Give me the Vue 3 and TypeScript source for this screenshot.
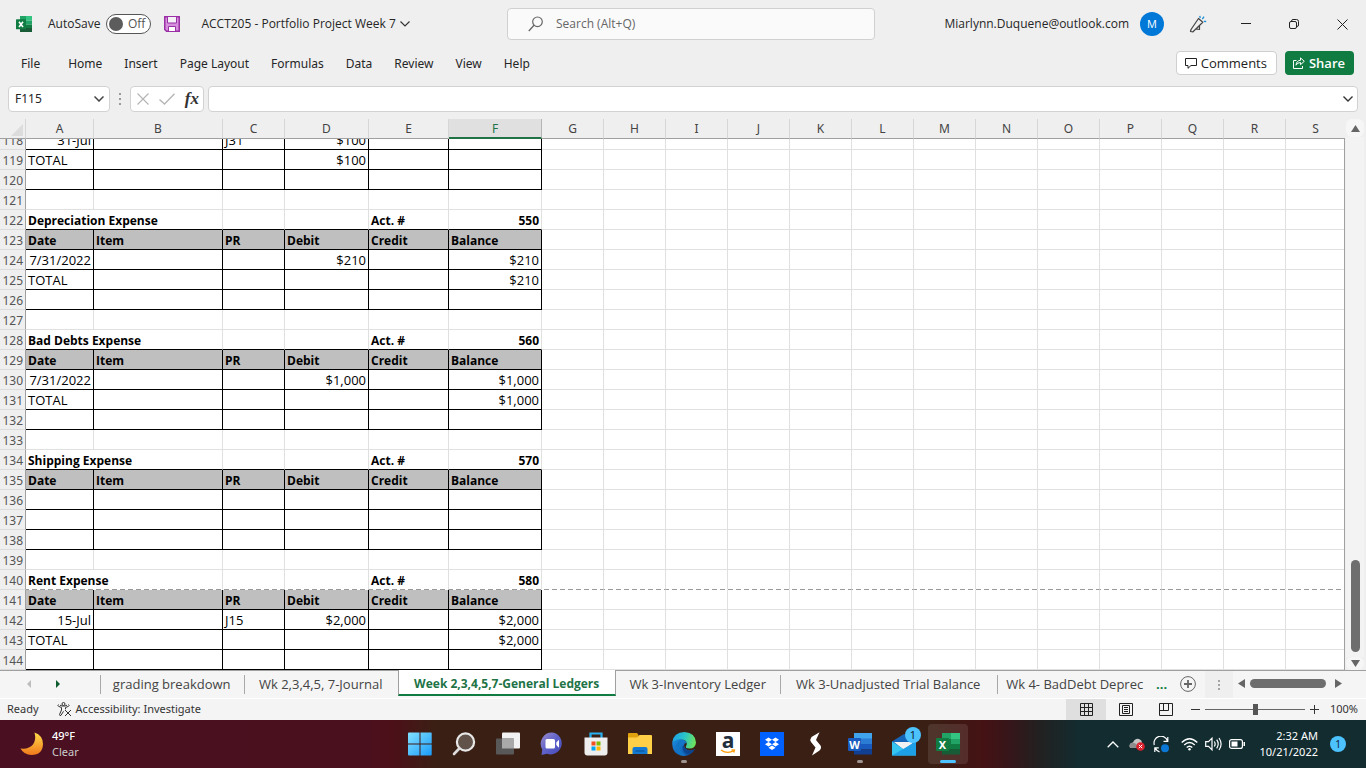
<script setup lang="ts">
import { ref } from 'vue'

interface Cell {
  text?: string
  span?: number
  align?: 'right'
}
interface Row {
  n: number
  kind: 'blank' | 'title' | 'head' | 'body'
  pageBreak?: boolean
  cells: Cell[]
}
interface Ledger {
  start: number
  name: string
  account: string
  entries: string[][]
  pageBreak?: boolean
}

const letters = 'ABCDEFGHIJKLMNOPQRS'.split('')
const menus = ['File', 'Home', 'Insert', 'Page Layout', 'Formulas', 'Data', 'Review', 'View', 'Help']
const headings = ['Date', 'Item', 'PR', 'Debit', 'Credit', 'Balance']

const toCells = (values: string[]): Cell[] =>
  headings.map((_, i) => {
    const text = values[i] ?? ''
    const numeric = text.startsWith('$') || /^\d/.test(text)
    return { text, align: numeric ? 'right' : undefined }
  })

const ledgers: Ledger[] = [
  { start: 122, name: 'Depreciation Expense', account: '550', entries: [['7/31/2022', '', '', '$210', '', '$210'], ['TOTAL', '', '', '', '', '$210'], []] },
  { start: 128, name: 'Bad Debts Expense', account: '560', entries: [['7/31/2022', '', '', '$1,000', '', '$1,000'], ['TOTAL', '', '', '', '', '$1,000'], []] },
  { start: 134, name: 'Shipping Expense', account: '570', entries: [[], [], []] },
  { start: 140, name: 'Rent Expense', account: '580', pageBreak: true, entries: [['15-Jul', '', 'J15', '$2,000', '', '$2,000'], ['TOTAL', '', '', '', '', '$2,000'], []] },
]

const rows: Row[] = [
  { n: 118, kind: 'body', cells: toCells(['31-Jul', '', 'J31', '$100']) },
  { n: 119, kind: 'body', cells: toCells(['TOTAL', '', '', '$100']) },
  { n: 120, kind: 'body', cells: toCells([]) },
]
for (const l of ledgers) {
  rows.push({ n: l.start - 1, kind: 'blank', cells: toCells([]) })
  rows.push({
    n: l.start,
    kind: 'title',
    pageBreak: l.pageBreak,
    cells: [{ text: l.name, span: 2 }, {}, {}, { text: 'Act. #' }, { text: l.account, align: 'right' }],
  })
  rows.push({ n: l.start + 1, kind: 'head', cells: headings.map((text) => ({ text })) })
  l.entries.forEach((e, i) => rows.push({ n: l.start + 2 + i, kind: 'body', cells: toCells(e) }))
}

const tabs = [
  { label: 'grading breakdown', width: 144 },
  { label: 'Wk 2,3,4,5, 7-Journal', width: 154 },
  { label: 'Week 2,3,4,5,7-General Ledgers', width: 218 },
  { label: 'Wk 3-Inventory Ledger', width: 164 },
  { label: 'Wk 3-Unadjusted Trial Balance', width: 217 },
  { label: 'Wk 4- BadDebt Deprec', width: 156 },
]
const activeTab = ref(2)
const nameBox = ref('F115')
const formula = ref('')
const search = ref('')
const zoom = ref(50)
const autosave = ref(false)
</script>

<template>
  <div class="app">
    <header class="titlebar">
      <div class="title-left">
        <svg class="xl-small" width="16" height="16" viewBox="0 0 24 24" aria-hidden="true">
          <rect x="6" y="0" width="9" height="7" fill="#21a366" /><rect x="15" y="0" width="9" height="7" fill="#33c481" />
          <rect x="6" y="7" width="9" height="6" fill="#107c41" /><rect x="15" y="7" width="9" height="6" fill="#21a366" />
          <rect x="6" y="13" width="9" height="11" fill="#185c37" /><rect x="15" y="13" width="9" height="5" fill="#107c41" /><rect x="15" y="18" width="9" height="6" fill="#185c37" />
          <rect x="0" y="5" width="15" height="15" rx="1" fill="#107c41" />
          <path d="M4.500 8.500l6 8M10.500 8.500l-6 8" stroke="#fff" stroke-width="2.400" />
        </svg>
        <label class="autosave">
          <span>AutoSave</span>
          <span class="toggle"><input v-model="autosave" type="checkbox" /><i></i><b>Off</b></span>
        </label>
        <button class="plain save" aria-label="Save">
          <svg width="16" height="16" viewBox="0 0 16 16"><path d="M.75.75h14.500v14.500H2.500L.75 13.500z" fill="#d68fdc" stroke="#9b2fa6" stroke-width="1.500" /><path d="M3.500 1v6h9V1" fill="#f5f0f5" stroke="#9b2fa6" /><path d="M4.500 15v-4.500h7V15" fill="#fff" stroke="#9b2fa6" /></svg>
        </button>
        <button class="plain doc">ACCT205 - Portfolio Project Week 7
          <svg width="10" height="6" viewBox="0 0 10 6"><path d="M.5.5L5 5 9.500.5" fill="none" stroke="#333" stroke-width="1.200" /></svg>
        </button>
      </div>
      <label class="search">
        <svg width="16" height="16" viewBox="0 0 16 16"><circle cx="9.500" cy="5.800" r="4.800" fill="none" stroke="#666" stroke-width="1.200" /><path d="M6 9.300L.8 15" stroke="#666" stroke-width="1.300" /></svg>
        <input v-model="search" type="text" placeholder="Search (Alt+Q)" aria-label="Search" />
      </label>
      <div class="title-right">
        <span class="email">Miarlynn.Duquene@outlook.com</span>
        <button class="plain avatar">M</button>
        <button class="plain win" aria-label="What's new">
          <svg width="18" height="18" viewBox="0 0 18 18" fill="none"><path d="M1.500 16.500L2 14.500 9.500 3.500 13.800 7.300 4 16.800zM7 14l1.500-1.400 2-2v3.900z" stroke="#444" stroke-width="1.200" stroke-linejoin="round" /><path d="M11.200 3L10.800.8M13.300 4.200l1.700-2.500M14.800 6.300l2.400.2" stroke="#1b8fd6" stroke-width="1.300" /></svg>
        </button>
        <button class="plain win" aria-label="Minimize"><svg width="10" height="10" viewBox="0 0 10 10"><path d="M0 4.500h10" stroke="#222" /></svg></button>
        <button class="plain win" aria-label="Restore"><svg width="10" height="10" viewBox="0 0 10 10" fill="none" stroke="#222"><rect x=".5" y="2.500" width="7" height="7" rx="1.500" /><path d="M2.500 2Q2.700.5 4 .5h3.500q2 0 2 2V6q0 1.500-1.500 1.500" /></svg></button>
        <button class="plain win" aria-label="Close"><svg width="11" height="11" viewBox="0 0 11 11"><path d="M.5.5l10 10M10.500.5l-10 10" stroke="#222" /></svg></button>
      </div>
    </header>

    <nav class="menubar">
      <button v-for="m in menus" :key="m" class="plain menu">{{ m }}</button>
      <span class="grow"></span>
      <button class="action comments">
        <svg width="12" height="11" viewBox="0 0 12 11" fill="none" stroke="#222"><path d="M.5.500h11v7H6L3 10.300V7.500H.5z" /></svg>Comments
      </button>
      <button class="action share">
        <svg width="12" height="12" viewBox="0 0 12 12" fill="none" stroke="#fff"><path d="M3.500 3.500h-3v8h9V9" /><path d="M3 8.200Q3.500 3.500 7.500 3.300V.9L11.300 4.300 7.500 7.700V5.500Q4.500 5.500 3 8.200z" /></svg>Share
      </button>
    </nav>

    <div class="formulabar">
      <div class="box namebox">
        <input v-model="nameBox" type="text" aria-label="Name box" />
        <svg width="10" height="6" viewBox="0 0 10 6"><path d="M.5.5L5 5 9.500.5" fill="none" stroke="#444" stroke-width="1.500" /></svg>
      </div>
      <svg class="dots" width="3" height="12" viewBox="0 0 3 12" fill="#9a9a9a"><rect y="0" width="2" height="2" /><rect y="5" width="2" height="2" /><rect y="10" width="2" height="2" /></svg>
      <div class="box fxbox">
        <button class="plain" aria-label="Cancel"><svg width="12" height="12" viewBox="0 0 12 12"><path d="M.5.5l11 11M11.500.5l-11 11" stroke="#b5b5b5" stroke-width="1.200" /></svg></button>
        <button class="plain" aria-label="Enter"><svg width="16" height="12" viewBox="0 0 16 12"><path d="M.5 6.500L5.500 11 15.500.7" fill="none" stroke="#b5b5b5" stroke-width="1.300" /></svg></button>
        <button class="plain fx" aria-label="Insert function">fx</button>
      </div>
      <div class="box fbox">
        <input v-model="formula" type="text" aria-label="Formula" />
        <svg width="10" height="6" viewBox="0 0 10 6"><path d="M.5.5L5 5 9.500.5" fill="none" stroke="#333" stroke-width="1.400" /></svg>
      </div>
    </div>

    <main class="sheet">
      <div class="grid">
        <table class="cols">
          <colgroup><col class="c-n" /><col v-for="l in letters" :key="l" :class="'c-' + l" /></colgroup>
          <thead>
            <tr>
              <th class="corner"><svg width="12" height="12" viewBox="0 0 12 12"><path d="M12 0v12H0z" fill="#dcdcdc" /></svg></th>
              <th v-for="l in letters" :key="l" scope="col" :class="{ selected: l === 'F' }">{{ l }}</th>
            </tr>
          </thead>
        </table>
        <div class="viewport">
          <table class="cells">
            <colgroup><col class="c-n" /><col v-for="l in letters" :key="l" :class="'c-' + l" /></colgroup>
            <tbody>
              <tr v-for="r in rows" :key="r.n" :class="[r.kind, { pagebreak: r.pageBreak }]">
                <th scope="row">{{ r.n }}</th>
                <td v-for="(c, i) in r.cells" :key="i" class="led" :class="c.align" :colspan="c.span">{{ c.text }}</td>
                <td v-for="l in letters.slice(6)" :key="l"></td>
              </tr>
            </tbody>
          </table>
        </div>
      </div>
      <div class="vscroll">
        <button class="plain" aria-label="Scroll up"><svg width="9" height="7" viewBox="0 0 9 7"><path d="M4.500 0L9 7H0z" fill="#666" /></svg></button>
        <div class="vtrack"><div class="vthumb"></div></div>
        <button class="plain down" aria-label="Scroll down"><svg width="9" height="7" viewBox="0 0 9 7"><path d="M0 0h9L4.500 7z" fill="#666" /></svg></button>
      </div>
    </main>

    <div class="tabs">
      <div class="tabnav">
        <button class="plain" aria-label="Previous sheet"><svg width="4" height="8" viewBox="0 0 4 8"><path d="M4 0v8L0 4z" fill="#bdbdbd" /></svg></button>
        <button class="plain" aria-label="Next sheet"><svg width="4" height="8" viewBox="0 0 4 8"><path d="M0 0v8l4-4z" fill="#0e5c2f" /></svg></button>
      </div>
      <button v-for="(t, i) in tabs" :key="t.label" class="plain tab" :class="{ active: i === activeTab }" :style="{ width: t.width + 'px' }" @click="activeTab = i">{{ t.label }}</button>
      <button class="plain more">...</button>
      <button class="plain add" aria-label="New sheet"><svg width="16" height="16" viewBox="0 0 16 16" fill="none" stroke="#666"><circle cx="8" cy="8" r="7.400" /><path d="M8 4v8M4 8h8" stroke-width="1.800" /></svg></button>
      <div class="splitter"><svg width="3" height="10" viewBox="0 0 3 10" fill="#a5a5a5"><rect width="2" height="2" /><rect y="4" width="2" height="2" /><rect y="8" width="2" height="2" /></svg></div>
      <div class="hscroll">
        <button class="plain" aria-label="Scroll left"><svg width="7" height="9" viewBox="0 0 7 9"><path d="M7 0v9L0 4.500z" fill="#666" /></svg></button>
        <div class="hthumb"></div>
        <button class="plain" aria-label="Scroll right"><svg width="7" height="9" viewBox="0 0 7 9"><path d="M0 0v9l7-4.500z" fill="#666" /></svg></button>
      </div>
    </div>

    <footer class="status">
      <span class="ready">Ready</span>
      <button class="plain access">
        <svg width="15" height="15" viewBox="0 0 15 15" fill="none" stroke="#333"><circle cx="6.500" cy="2" r="1.500" /><path d="M1.500 2.500Q.3 3.500 1.500 4.300L4.500 5.500V8L2.500 12.500Q2.700 14.300 4 13.300L6.500 9.300M11.500 2.500Q12.700 3.500 11.500 4.300L8.500 5.500V7.300M3 3.200l2 .8h3l2-.8M8 8l6 6M14 8l-6 6" /></svg>
        Accessibility: Investigate
      </button>
      <span class="grow"></span>
      <button class="plain view on" aria-label="Normal view"><svg width="13" height="13" viewBox="0 0 13 13" fill="none" stroke="#222"><path d="M.5.5h12v12H.5zM4.500.5v12M8.500.5v12M.5 4.500h12M.5 8.500h12" /></svg></button>
      <button class="plain view" aria-label="Page layout view"><svg width="14" height="13" viewBox="0 0 14 13" fill="none" stroke="#222"><path d="M.5.5h13v12H.5zM3.500 2.500h7v8h-7zM5 4.500h4M5 6.500h4M5 8.500h4" /></svg></button>
      <button class="plain view" aria-label="Page break view"><svg width="14" height="13" viewBox="0 0 14 13" fill="none" stroke="#222"><path d="M.5.500h13v12H.5zM4.500.5v7M9.500.5v7M.5 7.500h9" /></svg></button>
      <button class="plain zbtn" aria-label="Zoom out"><svg width="9" height="9" viewBox="0 0 9 9"><path d="M0 4.500h9" stroke="#333" /></svg></button>
      <input v-model="zoom" class="zoom" type="range" min="0" max="100" aria-label="Zoom" />
      <button class="plain zbtn" aria-label="Zoom in"><svg width="9" height="9" viewBox="0 0 9 9"><path d="M0 4.500h9M4.500 0v9" stroke="#333" /></svg></button>
      <span class="pct">100%</span>
    </footer>

    <div class="taskbar">
      <button class="plain weather">
        <svg width="24" height="24" viewBox="0 0 24 24">
          <defs><linearGradient id="moon" x1="0" y1="0" x2="0" y2="1"><stop offset="0" stop-color="#ffdc4a" /><stop offset="1" stop-color="#f0791c" /></linearGradient></defs>
          <path d="M14.500.500Q23 3.500 23 12 22.500 23 11.500 23 4 23 .5 16.500 9 17.500 13 12.500 16.500 7.500 14.500.5z" fill="url(#moon)" />
        </svg>
        <span><b>49°F</b><em>Clear</em></span>
      </button>
      <div class="apps">
        <button class="plain appbtn" aria-label="Start">
          <svg width="24" height="24" viewBox="0 0 24 24"><defs><linearGradient id="win" x1="0" y1="0" x2="1" y2="1"><stop offset="0" stop-color="#83e1ff" /><stop offset="1" stop-color="#1a9cfb" /></linearGradient></defs><path d="M0 1.500Q0 .5 1 .5h10.500v11H0zM12.500.5H23q.7 0 .7 1v10H12.500zM0 12.500h11.500v11H1q-1 0-1-1zM12.500 12.500h11.200v10q0 1-1 1H12.500z" fill="url(#win)" /></svg>
        </button>
        <button class="plain appbtn" aria-label="Search">
          <svg width="24" height="24" viewBox="0 0 24 24"><circle cx="13.500" cy="10" r="8.600" fill="#62534a" stroke="#e8e8e8" stroke-width="2.200" /><path d="M7.300 16.500L2 22" stroke="#ddd" stroke-width="2.600" stroke-linecap="round" /></svg>
        </button>
        <button class="plain appbtn" aria-label="Task view">
          <svg width="24" height="24" viewBox="0 0 24 24"><rect x="6" y=".5" width="18" height="16" rx="1" fill="#f2f2f2" /><rect x="0" y="6.500" width="18" height="16" rx="1" fill="#585858" /><path d="M6 6.500h12v10H6z" fill="#a9a9a9" /></svg>
        </button>
        <button class="plain appbtn" aria-label="Chat">
          <svg width="24" height="24" viewBox="0 0 24 24"><defs><linearGradient id="chat" x1="0" y1="0" x2="1" y2="1"><stop offset="0" stop-color="#9b8ccf" /><stop offset=".5" stop-color="#5f62c9" /><stop offset="1" stop-color="#4549b8" /></linearGradient></defs><path d="M12.500.5a11 11 0 1 1-5.500 21.200L1.500 23l.8-5.500A11.300 11.300 0 0 1 12.500.5z" fill="url(#chat)" /><rect x="5.500" y="7" width="9.500" height="9.500" rx="1.500" fill="#fff" /><path d="M16.300 10.500l2.700-2.700v8l-2.700-2.700z" fill="#fff" /></svg>
        </button>
        <button class="plain appbtn" aria-label="Store">
          <svg width="24" height="24" viewBox="0 0 24 24"><path d="M6.500 6V1.500h11V6" fill="none" stroke="#28b1f0" stroke-width="2.200" /><path d="M.5 5.500h23v15q0 3-3 3h-17q-3 0-3-3z" fill="#eee" /><rect x="7.500" y="9.500" width="4" height="4" fill="#f25022" /><rect x="12.500" y="9.500" width="4" height="4" fill="#7fba00" /><rect x="7.500" y="14.500" width="4" height="4" fill="#00a4ef" /><rect x="12.500" y="14.500" width="4" height="4" fill="#ffb900" /></svg>
        </button>
        <button class="plain appbtn" aria-label="File Explorer">
          <svg width="24" height="24" viewBox="0 0 24 24"><path d="M0 2q0-1 1-1h8l1.500 2v3H0z" fill="#e0a30e" /><path d="M0 5.500h9L11.500 3H23q1 0 1 1v18H0z" fill="#ffcf48" /><path d="M4.500 22v-5q0-2 2-2h11q2 0 2 2v5z" fill="#1479d2" /><path d="M7.500 19.500h9v-1h-9z" fill="#0b4f94" /></svg>
        </button>
        <button class="plain appbtn running" aria-label="Edge">
          <svg width="24" height="24" viewBox="0 0 24 24"><defs><linearGradient id="edge" x1="0" y1=".3" x2="1" y2=".5"><stop offset="0" stop-color="#1c9fe8" /><stop offset=".5" stop-color="#2ac5c7" /><stop offset="1" stop-color="#6fe35a" /></linearGradient><linearGradient id="edge2" x1="0" y1="0" x2="1" y2="1"><stop offset="0" stop-color="#1b8de0" /><stop offset="1" stop-color="#0d4a9c" /></linearGradient></defs><path d="M.2 10.500Q5 5 11 7.500 14 8.500 15 11q-2.500-.5-3 2 0 4 5 5.500 3 .5 5.800-1.500Q19 24 12 24 1 23.500.2 12z" fill="url(#edge2)" /><path d="M11 8.200q-3.500 2-3 6.800.5 5.500 6 8.500-6 1-9.500-3.500Q2.500 12 8 8.500z" fill="#1274c4" /><path d="M12 13q0 4.500 5 5.500 3 .5 5.800-1.500-1.800 4-5.300 5.500Q10 21 10.500 14.500z" fill="#0b4590" /><path d="M.2 10.500Q1.500 0 12.500 0 23.500.8 24 10.500q-.5 6-6.500 6-4.500 0-3.500-2.200 2-3.300-.8-5.800Q7 4.500.2 10.500z" fill="url(#edge)" /></svg>
        </button>
        <button class="plain appbtn" aria-label="Amazon"><span class="amazon">a<svg width="16" height="5" viewBox="0 0 16 5"><path d="M1 1q6.500 4.500 13 .5M11.500.8l3 .2-.8 2.500" fill="none" stroke="#f90" stroke-width="1.300" /></svg></span></button>
        <button class="plain appbtn" aria-label="Dropbox">
          <svg width="24" height="24" viewBox="0 0 24 24"><rect width="24" height="24" fill="#0061ff" /><path d="M8.500 5.500L12 7.800 8.500 10 5 7.800zM15.500 5.500L19 7.800 15.500 10 12 7.800zM8.500 10l3.500 2.300-3.500 2.200L5 12.300zM15.500 10l3.500 2.300-3.500 2.200-3.500-2.200zM12 13.500l3.500 2.200L12 18l-3.500-2.300z" fill="#fff" /></svg>
        </button>
        <button class="plain appbtn" aria-label="S app">
          <svg width="24" height="24" viewBox="0 0 24 24"><path d="M15.500.3L7.500 5Q5.500 7.500 7 10l4.500 5.500L8 23.500l7.500-5q2.500-2.500 1-5L12 8z" fill="#fff" /></svg>
        </button>
        <button class="plain appbtn running" aria-label="Word">
          <svg width="24" height="24" viewBox="0 0 24 24"><rect x="6" y="1" width="18" height="6" fill="#41a5ee" /><rect x="6" y="6.500" width="18" height="5.500" fill="#2b7cd3" /><rect x="6" y="12" width="18" height="5.500" fill="#185abd" /><rect x="6" y="17.500" width="18" height="5" fill="#103f91" /><rect y="6" width="13" height="13" rx="1" fill="#185abd" /><text x="6.500" y="16.500" class="glyph">W</text></svg>
        </button>
        <button class="plain appbtn" aria-label="Mail, 1 new">
          <svg width="24" height="24" viewBox="0 0 24 24"><path d="M0 9.500L12 2l12 7.500v13H0z" fill="#1565b8" /><path d="M2 10l10 8 10-8z" fill="#f2f2f2" /><path d="M0 9.500l12 8 12-8v14H0z" fill="#36c5f0" /><path d="M0 23.500l24-14v14z" fill="#1ea0e6" /></svg>
          <span class="badge">1</span>
        </button>
        <button class="plain appbtn current" aria-label="Excel">
          <svg width="24" height="24" viewBox="0 0 24 24"><rect x="6" y="1" width="9" height="6" fill="#21a366" /><rect x="15" y="1" width="9" height="6" fill="#33c481" /><rect x="6" y="7" width="9" height="10" fill="#107c41" /><rect x="15" y="7" width="9" height="5" fill="#21a366" /><rect x="15" y="12" width="9" height="5" fill="#107c41" /><rect x="6" y="17" width="18" height="5.500" fill="#185c37" /><rect y="6" width="13" height="13" rx="1" fill="#107c41" /><text x="6.500" y="16.500" class="glyph">X</text></svg>
        </button>
      </div>
      <div class="tray">
        <button class="plain slot" aria-label="Show hidden icons"><svg width="12" height="7" viewBox="0 0 12 7"><path d="M.7 6.300L6 1l5.300 5.300" fill="none" stroke="#fff" stroke-width="1.300" /></svg></button>
        <button class="plain slot" aria-label="OneDrive"><svg width="16" height="14" viewBox="0 0 16 14"><path d="M1.500 11Q-.5 9 1.500 6.500 3 5.500 4 5.500 6 1 10 2q3 1 3 4 2 1 2 3l-2 2z" fill="#c4c4c4" /><path d="M1.500 11q-2-2 0-4.500Q4 5 6.500 6.500L11 11z" fill="#8d8d8d" /><circle cx="11.500" cy="9.500" r="4.300" fill="#d9202b" /><path d="M9.800 7.800l3.400 3.400M13.200 7.800l-3.400 3.400" stroke="#fff" /></svg></button>
        <button class="plain slot" aria-label="Updates"><svg width="17" height="17" viewBox="0 0 17 17" fill="none" stroke="#fff" stroke-width="1.200"><path d="M1.300 9A6.500 6.500 0 0 1 14.500 5M14.800 1v4.300h-4.300M6.500 15.800Q3.500 15 2.300 12M5.800 11.800H1.800V16" /><circle cx="12" cy="12.300" r="4" fill="#0a78d4" stroke="none" /></svg></button>
        <button class="plain sys" aria-label="Network, sound and battery">
          <svg width="24" height="13" viewBox="-4 0 24 13" fill="none" stroke="#fff" stroke-width="1.300"><path d="M.7 4.500q7.800-7.500 15.600 0M3.200 7q5.300-5 10.600 0M5.700 9.500q2.800-2.600 5.600 0" /><circle cx="8.500" cy="11.300" r="1.200" fill="#fff" stroke="none" /></svg>
          <svg width="24" height="14" viewBox="-4 0 24 14" fill="none" stroke="#fff" stroke-width="1.200"><path d="M.7 4.700h2.800L7 1.200v11.600L3.500 9.300H.7zM9.300 4.500q1.700 2.500 0 5M11.700 2.700q3 4.300 0 8.600M14 1q4.200 6 0 12" /></svg>
          <svg width="24" height="10" viewBox="-4 0 24 10"><rect x=".6" y=".6" width="12.800" height="8.800" rx="2" fill="none" stroke="#fff" stroke-width="1.200" /><rect x="2.500" y="2.500" width="6" height="5" fill="#fff" /><rect x="14.500" y="3" width="1.500" height="4" fill="#fff" /></svg>
        </button>
        <button class="plain clock"><span>2:32 AM</span><span>10/21/2022</span></button>
        <button class="plain note" aria-label="Notifications">1</button>
      </div>
    </div>
  </div>
</template>

<style>
body { margin: 0; }
</style>

<style scoped>
.app { height: 100vh; display: flex; flex-direction: column; background: #efefef; color: #262626; font: 12px/16px "Noto Sans", "Open Sans", sans-serif; overflow: hidden; }
.app *, .app *::before, .app *::after { box-sizing: border-box; }
.plain { border: 0; padding: 0; margin: 0; background: none; color: inherit; font: inherit; display: flex; align-items: center; justify-content: center; white-space: nowrap; }
input { font: inherit; color: inherit; border: 0; background: none; outline: 0; padding: 0; margin: 0; min-width: 0; }
svg { display: block; flex: none; }
.grow { flex: 1; }

.titlebar { flex: none; height: 48px; display: grid; grid-template-columns: minmax(0, 507fr) 368px minmax(0, 491fr); align-items: center; font-family: "Open Sans", sans-serif; }
.title-left { display: flex; align-items: center; padding-left: 16px; white-space: nowrap; }
.autosave { display: flex; align-items: center; margin-left: 16px; gap: 6px; }
.toggle { position: relative; width: 45px; height: 20px; border: 1px solid #555; border-radius: 10px; background: #fff; display: flex; align-items: center; padding: 0 5px 0 2px; justify-content: space-between; color: #555; }
.toggle input { position: absolute; inset: 0; opacity: 0; }
.toggle i { width: 14px; height: 14px; border-radius: 50%; background: #5c5c5c; }
.toggle b { font-weight: 400; }
.save { margin-left: 13px; }
.doc { margin-left: 21px; gap: 4px; }
.search { height: 32px; border: 1px solid #d0d0d0; border-radius: 4px; background: #fafafa; display: flex; align-items: center; padding: 0 20px; gap: 12px; font-size: 12px; }
.search input { flex: 1; }
.search input::placeholder { color: #666; opacity: 1; }
.title-right { display: flex; align-items: center; justify-content: flex-end; }
.avatar { width: 24px; height: 24px; margin: 0 10px 0 11px; border-radius: 50%; background: #0078d7; color: #fff; font-size: 11px; }
.win { width: 48px; height: 32px; }

.menubar { flex: none; height: 30px; display: flex; align-items: center; padding: 0 12px 0 10px; }
.menu { height: 24px; padding: 2px 11px 0; }
.menu:first-child { margin-right: 6px; }
.action { height: 24px; border-radius: 4px; display: flex; align-items: center; gap: 4px; padding: 0 9px 0 8px; font: 500 13px/16px "Open Sans", sans-serif; white-space: nowrap; }
.comments { border: 1px solid #cfcfcf; background: #fff; color: #222; }
.share { border: 0; margin-left: 8px; background: #107c41; color: #fff; font-weight: 600; }

.formulabar { flex: none; height: 41px; padding: 8px 8px 7px; display: flex; align-items: center; }
.box { height: 26px; background: #fff; border: 1px solid #d2d2d2; border-radius: 4px; display: flex; align-items: center; }
.namebox { width: 102px; padding: 0 5px 0 6px; }
.namebox input { flex: 1; width: 60px; }
.dots { margin: 0 8px 0 9px; }
.fxbox { width: 74px; padding: 0 4px 0 6px; justify-content: space-between; }
.fx { font: italic bold 17px/20px "Liberation Serif", serif; color: #333; }
.fbox { flex: 1; margin-left: 4px; padding: 0 4px; }
.fbox input { flex: 1; }

.sheet { flex: 1; min-height: 0; display: flex; }
.grid { flex: 1; min-width: 0; display: flex; flex-direction: column; }
.viewport { flex: 1; min-height: 0; overflow: hidden; display: flex; flex-direction: column; justify-content: flex-end; background: #fff; border-right: 1px solid #a0a0a0; }
table { table-layout: fixed; width: 100%; border-collapse: separate; border-spacing: 0; flex: none; }
.c-n { width: 26px; }
.c-A { width: 68px; }
.c-B { width: 129px; }
.c-C, .c-G, .c-H, .c-I, .c-J, .c-K, .c-L, .c-M, .c-N, .c-O, .c-P, .c-Q, .c-R { width: 62px; }
.c-D { width: 84px; }
.c-E { width: 80px; }
.c-F { width: 93px; }
.cols th { height: 20px; padding: 0; font: 12px/18px "Noto Sans", sans-serif; color: #444; border-bottom: 1px solid #a0a0a0; border-right: 1px solid #d6d6d6; text-align: center; }
.cols th:last-child { border-right: 0; }
.cols th.selected { background: #e0e0e0; color: #217346; border-bottom: 2px solid #217346; line-height: 17px; border-right-color: #b5b5b5; }
.cols .corner svg { margin: 3px 0 0 11px; }
.cells th, .cells td { height: 20px; padding: 2px 2px 0; line-height: 17px; white-space: nowrap; overflow: hidden; text-align: left; }
.cells th { background: #efefef; border-right: 1px solid #a0a0a0; border-bottom: 1px solid #dcdcdc; color: #555; font-weight: 400; text-align: right; }
.cells td { font-family: "Open Sans", sans-serif; font-size: 13px; color: #000; border-right: 1px solid #e0e0e0; border-bottom: 1px solid #e0e0e0; }
.cells td:last-child { border-right: 0; }
.cells td.right { text-align: right; }
.cells .body .led, .cells .head .led { border-color: #000; }
.cells .title .led { border-bottom-color: #000; font-weight: 700; font-size: 12px; }
.cells .head .led { background: #bfbfbf; font-weight: 700; font-size: 12px; }
.cells .pagebreak { background: repeating-linear-gradient(to right, #999 0 5px, #fff 5px 8px) left bottom / 100% 1px no-repeat; }
.cells .pagebreak td, .cells .pagebreak .led { border-bottom-color: transparent; }

.vscroll { flex: none; width: 21px; padding: 0 2px 0 1px; display: flex; flex-direction: column; align-items: center; }
.vscroll button { width: 18px; height: 18px; background: #f6f6f6; border-radius: 6px; }
.vscroll .down { height: 13px; }
.vtrack { flex: 1; width: 18px; display: flex; flex-direction: column; align-items: center; justify-content: flex-end; background: #f3f3f3; padding-bottom: 5px; }
.vthumb { width: 9px; height: 92px; border-radius: 5px; background: #6e6e6e; }

.tabs { flex: none; height: 29px; display: flex; align-items: stretch; background: #f5f5f5; border-top: 1px solid #a0a0a0; border-bottom: 1px solid #fff; color: #444; font: 13px/16px "Open Sans", sans-serif; }
.tabnav { width: 100px; display: flex; align-items: center; padding: 0 40px 2px 27px; justify-content: space-between; }
.tab { position: relative; padding-bottom: 2px; flex: none; }
.tab::before { content: ""; position: absolute; left: 0; top: 4px; width: 1px; height: 19px; background: #a8a8a8; }
.tab.active { height: 26px; margin-top: -1px; padding: 3px 0 0; background: #fff; color: #217346; font-size: 12px; font-weight: 700; border: 1px solid #a0a0a0; border-top: 0; border-bottom: 2px solid #107c41; }
.tab.active::before, .tab.active + .tab::before { display: none; }
.more { width: 18px; padding-bottom: 2px; color: #107c41; font-weight: 700; }
.add { width: 35px; padding-bottom: 2px; }
.splitter { margin-left: auto; width: 28px; background: #efefef; display: flex; align-items: center; justify-content: center; }
.hscroll { width: 134px; padding: 0 24px 2px 5px; display: flex; align-items: center; background: #f5f5f5; }
.hthumb { width: 76px; height: 9px; margin: 0 auto 0 5px; border-radius: 5px; background: #6e6e6e; }

.status { flex: none; height: 21px; display: flex; align-items: stretch; background: #f4f4f4; font-size: 11px; line-height: 20px; color: #333; }
.ready { padding-left: 7px; }
.access { margin-left: 18px; padding-bottom: 1px; gap: 4px; }
.view { width: 40px; padding-bottom: 1px; }
.view.on { background: #dfdfdf; }
.zbtn { width: 19px; }
.zoom { appearance: none; width: 100px; height: 21px; background: linear-gradient(#666, #666) center / 100% 1px no-repeat; }
.zoom::-webkit-slider-thumb { appearance: none; width: 5px; height: 11px; background: #555; border: 0; }
.pct { width: 42px; padding-right: 8px; text-align: right; }

.taskbar { flex: none; height: 48px; padding-left: 2px; display: grid; grid-template-columns: 1fr auto 1fr; align-items: center; color: #fff; font-size: 11px; background: linear-gradient(to right, #4a1022 0, #4b101d 27%, #4b1118 29%, #3a2014 32%, #3a1f14 68%, #451214 72%, #35161a 74%, #232020 76%, #122c30 79%, #122c30 100%); }
.weather { justify-self: start; margin-left: 18px; gap: 8px; }
.weather span { display: flex; flex-direction: column; align-items: flex-start; }
.weather b { font-weight: 500; }
.weather em { font-style: normal; color: #ccc; }
.apps { display: flex; gap: 4px; }
.appbtn { position: relative; width: 40px; height: 40px; border-radius: 4px; }
.appbtn.current { background: rgba(255, 255, 255, 0.1); }
.running::after, .current::after { content: ""; position: absolute; left: 17px; bottom: 1px; width: 6px; height: 3px; border-radius: 2px; background: #a09490; }
.current::after { left: 12px; width: 16px; background: #4cc2ff; }
.glyph { font: bold 11px "Noto Sans", sans-serif; fill: #fff; text-anchor: middle; }
.amazon { width: 24px; height: 24px; background: #fff; color: #222f3e; font: bold 21px/17px "Noto Sans", sans-serif; display: flex; flex-direction: column; align-items: center; }
.badge { position: absolute; right: 3px; top: 3px; width: 16px; height: 16px; border-radius: 50%; background: #4cc2ff; color: #123; text-align: center; font-size: 11px; }
.tray { display: flex; align-items: center; justify-content: flex-end; padding-right: 20px; }
.slot { width: 24px; height: 40px; }
.sys { height: 40px; margin-left: 4px; }
.clock { flex-direction: column; align-items: flex-end; width: 69px; }
.note { width: 16px; height: 16px; margin-left: 12px; border-radius: 50%; background: #4cc2ff; color: #123; font-size: 10px; }
</style>
